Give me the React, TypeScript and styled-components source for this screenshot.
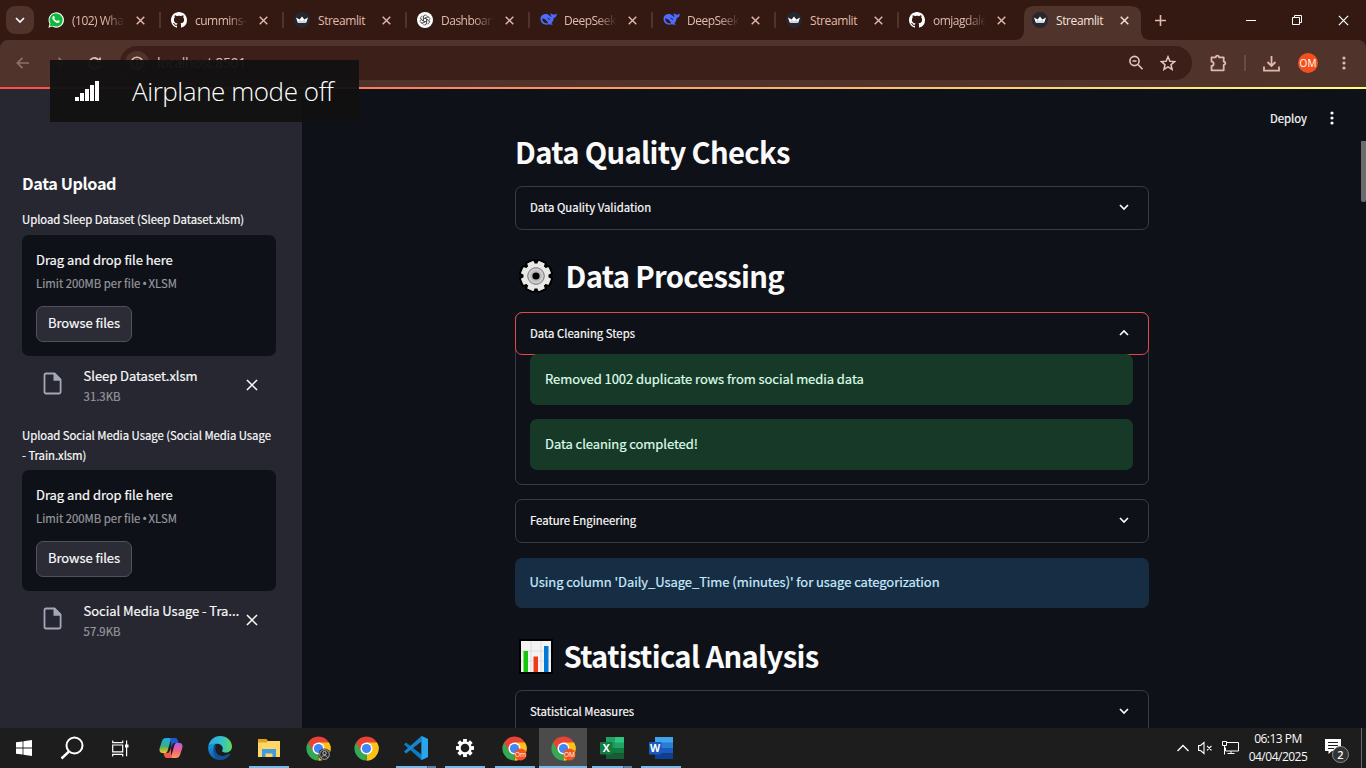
import React from "react";
import styled, { createGlobalStyle } from "styled-components";

const source = `"Noto Sans CJK KR", "Noto Sans", sans-serif`;
const segoe = `"Open Sans", "Noto Sans", sans-serif`;

const Global = createGlobalStyle`
  * { box-sizing: border-box; }
  html, body { margin: 0; padding: 0; overflow: hidden; background: #0e1117; }
  svg { display: block; flex: none; }
`;

const Screen = styled.div`
  position: relative;
  width: 1366px;
  height: 768px;
  display: flex;
  flex-direction: column;
  overflow: hidden;
  font-family: ${source};
  color: #fafafa;
`;

/* ---------- browser chrome ---------- */
const TabStrip = styled.div`
  height: 40px;
  flex: none;
  display: flex;
  align-items: stretch;
  background: #331912;
  font-family: ${segoe};
`;
const TabSearch = styled.div`
  width: 28px;
  height: 28px;
  margin: 6px 4px 0 6px;
  border-radius: 9px;
  background: #50332b;
  display: flex;
  align-items: center;
  justify-content: center;
`;
const Tab = styled.div<{ $active?: boolean; $sep?: boolean }>`
  width: 123px;
  height: 40px;
  display: flex;
  align-items: center;
  position: relative;
  padding-left: 10px;
  color: ${(p) => (p.$active ? "#f5e4de" : "#e2b9ad")};
  &::after {
    content: "";
    position: absolute;
    right: 0;
    top: 12px;
    width: 2px;
    height: 16px;
    background: ${(p) => (p.$sep ? "#50332b" : "transparent")};
  }
`;
const ActiveShape = styled.svg`
  position: absolute;
  left: -8px;
  top: 0;
`;
const TabTitle = styled.div<{ $fade?: boolean }>`
  position: relative;
  width: 54px;
  margin-left: 8px;
  padding-top: 1px;
  overflow: hidden;
  white-space: nowrap;
  font-size: 12px;
  line-height: 18px;
  letter-spacing: ${(p) => (p.$fade ? -0.5 : -0.4)}px;
  mask-image: ${(p) => (p.$fade ? "linear-gradient(90deg, #000 60%, transparent 98%)" : "none")};
`;
const TabClose = styled.div`
  position: relative;
  width: 12px;
  margin-left: 10px;
`;
const Fav = styled.div`
  position: relative;
  width: 16px;
  height: 16px;
`;
const NewTab = styled.div`
  display: flex;
  align-items: center;
  margin-left: 10px;
`;
const WindowButtons = styled.div`
  margin-left: auto;
  display: flex;
  align-items: center;
`;
const WinButton = styled.div`
  width: 46px;
  display: flex;
  justify-content: center;
`;
const Toolbar = styled.div`
  height: 47px;
  flex: none;
  display: flex;
  align-items: flex-start;
  padding-top: 6px;
  background: #50332b;
  border-radius: 8px 8px 0 0;
  color: #e2b9ad;
`;
const ChromeFrame = styled.div`
  flex: none;
  background: #331912;
`;
const NavIcon = styled.div<{ $dim?: boolean; $first?: boolean }>`
  width: 36px;
  height: 34px;
  margin-left: ${(p) => (p.$first ? 4 : 0)}px;
  display: flex;
  align-items: center;
  justify-content: center;
  opacity: ${(p) => (p.$dim ? 0.45 : 1)};
`;
const Omnibox = styled.div`
  margin-left: 8px;
  width: 1072px;
  height: 34px;
  border-radius: 17px;
  background: #3b1f18;
  display: flex;
  align-items: center;
  padding: 0 16px 0 5px;
  font: 14px/20px ${segoe};
  letter-spacing: -0.4px;
`;
const InfoBadge = styled.div`
  width: 24px;
  height: 24px;
  border-radius: 12px;
  background: #50332b;
  display: flex;
  align-items: center;
  justify-content: center;
  margin-right: 8px;
`;
const OmniActions = styled.div`
  margin-left: auto;
  display: flex;
  gap: 16px;
`;
const ToolIcons = styled.div`
  flex: 1;
  height: 34px;
  display: flex;
  align-items: center;
  padding-left: 18px;
`;
const ToolDivider = styled.div`
  width: 2px;
  height: 16px;
  margin: 0 17px 0 17px;
  background: #6c4a41;
`;
const Avatar = styled.div`
  width: 20px;
  height: 20px;
  border-radius: 50%;
  margin: 0 24px 0 18px;
  background: #f4511e;
  color: #fff;
  font: 10px/20px ${segoe};
  text-align: center;
`;
const Gradient = styled.div`
  height: 2px;
  flex: none;
  background: linear-gradient(90deg, #ff4b4b, #fffd80);
`;

/* ---------- page ---------- */
const Page = styled.div`
  height: 639px;
  flex: none;
  display: flex;
  overflow: hidden;
  -webkit-text-stroke: 0.200px;
`;
const Sidebar = styled.aside`
  width: 302px;
  height: 100%;
  padding: 81px 26px 0 22px;
  background: #262730;
`;
const SideHeading = styled.h3`
  margin: 0;
  height: 26px;
  font-size: 16.3px;
  line-height: 26px;
  font-weight: 700;
  letter-spacing: -0.4px;
  -webkit-text-stroke: 0;
`;
const UploadGroup = styled.section<{ $top: number }>`
  margin-top: ${(p) => p.$top}px;
`;
const UploadLabel = styled.div`
  font-size: 11.35px;
  line-height: 20px;
  letter-spacing: -0.040px;
  white-space: nowrap;
`;
const Dropzone = styled.div<{ $gap: number }>`
  height: 121px;
  margin-top: ${(p) => p.$gap}px;
  padding: 14px;
  border-radius: 7px;
  background: #0e1117;
`;
const DropTitle = styled.div`
  font-size: 13px;
  line-height: 22px;
  letter-spacing: -0.060px;
`;
const Muted = styled.div<{ $height: number }>`
  height: ${(p) => p.$height}px;
  font-size: 11.35px;
  line-height: ${(p) => p.$height}px;
  color: #96979c;
`;
const Bullet = styled.span`
  font-family: "Noto Sans", sans-serif;
  font-size: 12.500px;
  line-height: 1;
  margin: 0 -0.800px;
`;
const BrowseButton = styled.button`
  display: block;
  width: 96px;
  height: 36px;
  margin: 11px 0 0;
  padding: 0 0 2px;
  border: 1px solid #51525b;
  border-radius: 7px;
  background: #2b2c36;
  color: #fafafa;
  font: 13px/32px ${source};
  letter-spacing: -0.050px;
  -webkit-text-stroke: 0.200px;
`;
const FileRow = styled.div`
  display: flex;
  align-items: center;
  height: 40px;
  margin-top: 10px;
  padding-left: 20px;
`;
const FileGlyph = styled.div`
  padding-bottom: 5px;
`;
const FileText = styled.div`
  width: 160px;
  margin-left: 20px;
`;
const FileName = styled.div`
  font-size: 13px;
  height: 20px;
  line-height: 20px;
  letter-spacing: -0.050px;
  white-space: nowrap;
`;
const Ellipsis = styled.span`
  font-family: "Noto Sans", sans-serif;
  font-size: 14px;
  line-height: 1;
`;
const FileClose = styled.div`
  margin-left: 2px;
  padding-bottom: 2px;
`;
const Main = styled.main`
  flex: 1;
  position: relative;
  padding-left: 213px;
`;
const Column = styled.div`
  width: 634px;
  display: flex;
  flex-direction: column;
`;
const Heading = styled.h2<{ $top: number; $gap?: number }>`
  display: flex;
  align-items: center;
  gap: ${(p) => p.$gap ?? 0}px;
  height: 42px;
  margin: ${(p) => p.$top}px 0 0;
  font-size: 29.2px;
  line-height: 42px;
  font-weight: 700;
  white-space: nowrap;
  -webkit-text-stroke: 0;
`;
const HeadingText = styled.span`
  padding-bottom: 2px;
  letter-spacing: -0.660px;
`;
const Emoji = styled.span`
  margin-left: 4px;
`;
const Expander = styled.div<{ $top: number; $height: number }>`
  flex: none;
  height: ${(p) => p.$height}px;
  margin-top: ${(p) => p.$top}px;
  border: 1px solid #3a3c42;
  border-radius: 7px;
`;
const Summary = styled.div<{ $open?: boolean }>`
  display: flex;
  justify-content: space-between;
  align-items: center;
  height: ${(p) => (p.$open ? 43 : 42)}px;
  margin: ${(p) => (p.$open ? "-1px" : "0")};
  padding: 0 19px 2px 14px;
  border: ${(p) => (p.$open ? "1px solid #e5484a" : "0")};
  border-radius: 7px;
  font-size: 11.35px;
  line-height: 20px;
`;
const Alert = styled.div<{ $top: number; $inset?: boolean; $info?: boolean }>`
  height: ${(p) => (p.$info ? 50 : 51)}px;
  flex: none;
  margin: ${(p) => p.$top}px ${(p) => (p.$inset ? "15px 0 14px" : "0 0")};
  padding: 0 15px 0 ${(p) => (p.$info ? 14.5 : 15)}px;
  border-radius: 7px;
  background: ${(p) => (p.$info ? "#172d43" : "#173928")};
  color: ${(p) => (p.$info ? "#c7ebff" : "#dffde9")};
  font-size: 13px;
  line-height: ${(p) => (p.$info ? 48 : 50)}px;
  letter-spacing: -0.065px;
`;
const PageActions = styled.div`
  position: absolute;
  right: 32px;
  top: 19px;
  display: flex;
  align-items: center;
  gap: 23px;
  font-size: 11.35px;
  line-height: 20px;
`;
const ScrollThumb = styled.div`
  position: absolute;
  right: 0;
  top: 52px;
  width: 5px;
  height: 61px;
  border-radius: 0 0 2px 2px;
  background: #6b6b6d;
`;

/* ---------- taskbar ---------- */
const Taskbar = styled.footer`
  height: 40px;
  flex: none;
  display: flex;
  background: #1d1d1d;
  font-family: ${segoe};
`;
const TaskItem = styled.div<{ $w: number; $active?: boolean; $line?: number; $tail?: boolean }>`
  position: relative;
  width: ${(p) => p.$w}px;
  display: flex;
  align-items: center;
  justify-content: center;
  background: ${(p) => (p.$active ? "#4b4b4b" : "transparent")};
  &::after {
    content: "";
    position: absolute;
    bottom: 0;
    left: calc(50% - ${(p) => (p.$line ?? 0) / 2}px);
    width: ${(p) => p.$line ?? 0}px;
    height: 2px;
    background: ${(p) => (p.$tail ? "linear-gradient(90deg,#76b9ed 31px,#3f6483 31px,#3f6483 32px,#5683a6 32px)" : "#76b9ed")};
  }
`;
const Tray = styled.div`
  margin-left: auto;
  display: flex;
  align-items: center;
  gap: 9px;
`;
const Clock = styled.div`
  width: 64px;
  margin: 0 6px 0 -2px;
  font-size: 12px;
  line-height: 18px;
  letter-spacing: -0.500px;
  text-align: center;
  white-space: nowrap;
`;
const Notices = styled.div`
  position: relative;
  width: 26px;
  height: 28px;
  margin-right: 1px;
`;
const Count = styled.div`
  position: absolute;
  left: 7px;
  top: 12px;
  width: 17px;
  height: 17px;
  border: 1px solid #8b8b8b;
  border-radius: 50%;
  background: #333;
  font: 600 11px/15px ${segoe};
  text-align: center;
`;
const ShowDesktop = styled.div`
  width: 5px;
  height: 40px;
  border-left: 1px solid #6a6a6a;
`;

const Toast = styled.div`
  position: absolute;
  left: 50px;
  top: 60px;
  width: 309px;
  height: 62px;
  display: flex;
  align-items: center;
  padding-left: 25px;
  background: rgba(17, 17, 17, 0.95);
`;
const ToastText = styled.div`
  margin-left: 32px;
  font: 300 26px/34px ${segoe};
  letter-spacing: -0.430px;
  color: #fff;
  white-space: nowrap;
`;

/* ---------- drawings ---------- */
const Cross = ({ size = 9, width = 1.6, color = "currentColor" }) => (
  <svg width={size} height={size} viewBox="0 0 10 10" stroke={color} strokeWidth={width}>
    <path d="M.8.8l8.4 8.4M9.2.8L.8 9.2" />
  </svg>
);
const Chevron = ({ up = false, size = 10, width = 1.7 }) => (
  <svg width={size} height={size} viewBox="0 0 10 10" fill="none" stroke="currentColor" strokeWidth={width}>
    <path d={up ? "M1 7l4-4 4 4" : "M1 3l4 4 4-4"} />
  </svg>
);
const Dots = ({ color }: { color: string }) => (
  <svg width="4" height="14" viewBox="0 0 4 14" fill={color}>
    <circle cx="2" cy="2" r="1.600" /><circle cx="2" cy="7" r="1.600" /><circle cx="2" cy="12" r="1.600" />
  </svg>
);
const WhatsApp = () => (
  <svg width="16" height="16" viewBox="0 0 16 16">
    <path d="M.4 15.7l1.100-4A7.7 7.7 0 1 1 4.300 14.600z" fill="#fff" />
    <path d="M1.700 14.400l.8-2.9a6.600 6.600 0 1 1 2.300 2.200z" fill="#12b83c" />
    <path d="M5.200 4.200c.6-.5 1-.2 1.200.3l.4 1c.1.3-.5.8-.5 1 .5 1.200 1.500 2 2.700 2.500.4 0 .8-1 1.100-.9l1.500.8c.4.7-.6 2-1.700 2C7.200 11 4.400 7.800 4.300 6.100c0-.8.4-1.500.9-1.900z" fill="#fff" />
  </svg>
);
const GitHub = () => (
  <svg width="16" height="16" viewBox="0 0 16 16" fill="#fff">
    <path d="M8 0C3.580 0 0 3.580 0 8c0 3.540 2.290 6.530 5.470 7.590.4.070.55-.17.55-.38 0-.19-.010-.820-.010-1.490-2.010.37-2.530-.49-2.690-.94-.09-.23-.48-.94-.82-1.130-.28-.15-.68-.52-.010-.530.630-.010 1.080.58 1.230.82.720 1.210 1.870.87 2.330.66.070-.52.280-.87.510-1.070-1.780-.2-3.640-.89-3.640-3.950 0-.87.310-1.590.82-2.150-.080-.2-.360-1.020.080-2.120 0 0 .67-.21 2.200.82.640-.18 1.320-.27 2-.27s1.360.09 2 .27c1.530-1.040 2.200-.82 2.200-.82.440 1.100.160 1.920.080 2.120.51.56.82 1.270.82 2.150 0 3.070-1.870 3.750-3.650 3.950.29.25.54.73.54 1.480 0 1.070-.010 1.930-.010 2.200 0 .21.150.46.550.38A8 8 0 0 0 16 8c0-4.420-3.580-8-8-8z" />
  </svg>
);
const Crown = () => (
  <svg width="16" height="16" viewBox="0 0 16 16">
    <circle cx="8" cy="8" r="8" fill="#262730" />
    <path d="M2 5.500l3.600 1.900L8 4.500l2.400 2.900L14 5.500 12.300 10.500Q8 11.600 3.700 10.500z" fill="#fff" />
    <path d="M5.600 7.400L8 9.200l2.400-1.800 1.900 3.100Q8 11.600 3.700 10.500z" fill="#d6d6da" />
  </svg>
);
const OpenAI = () => (
  <svg width="16" height="16" viewBox="0 0 16 16">
    <circle cx="8" cy="8" r="8" fill="#fff" />
    <g fill="none" stroke="#444" strokeWidth=".700">
      {[0, 60, 120, 180, 240, 300].map((a) => (
        <path key={a} d="M6.400 9V5a2.100 2.100 0 0 1 3.900-1M6.400 7.100L9.700 5.200a2 2 0 0 1 2.300.2" transform={`rotate(${a} 8 8)`} />
      ))}
    </g>
  </svg>
);
const Whale = () => (
  <svg width="17" height="14" viewBox="0 0 17 14">
    <path d="M.5 7C.5 3.800 3 2 6 2c1.500 0 2.300.6 3.300 1.600.8.8 1.700 1.500 2.400 1.500C10.600 3.700 10.300 2 10.800.8c.4.9 1.300 1.600 2.300 1.800 1.300.1 2.400-.3 3.600-1.200.2 2.400-.9 4.200-3 4.700-.1 2.300-1 4-2.400 5.200.5.500 1.200.7 1.800 1-1.500.7-3 .5-4.200 0C4.500 13.600.5 11.300.5 7z" fill="#4d6bfe" />
    <path d="M2.200 6.500c2.500 0 4.500 1.800 6 4.700-3 .8-6-1.300-6-4.700zM7 5.700c1.500-.3 3 .8 3.100 2.600-.8-.2-1.200-1.200-3.100-2.600z" fill="#331912" />
  </svg>
);
const favicons: Record<string, React.ReactNode> = {
  wa: <WhatsApp />, gh: <GitHub />, st: <Crown />, ai: <OpenAI />, ds: <Whale />,
};

const GearEmoji = () => (
  <svg width="34" height="34" viewBox="-17 -17 34 34">
    <g fill="#e8e8e8" stroke="#000" strokeWidth="4" strokeLinejoin="round">
      {[22.5, 67.5, 112.5, 157.5].map((a) => (
        <rect key={a} x="-3.500" y="-15" width="7" height="30" transform={`rotate(${a})`} />
      ))}
      <circle r="12" />
    </g>
    <g fill="#e8e8e8">
      {[22.5, 67.5, 112.5, 157.5].map((a) => (
        <rect key={a} x="-3.500" y="-15" width="7" height="30" rx=".8" transform={`rotate(${a})`} />
      ))}
      <circle r="12.500" />
    </g>
    <circle r="8.300" fill="#ccc" stroke="#777" />
    <circle r="5.600" fill="#b8b8b8" /><circle r="3.600" fill="#000" />
  </svg>
);
const ChartEmoji = () => (
  <svg width="34" height="35" viewBox="0 0 34 35">
    <path d="M0 0h34v35H0z" fill="#000" />
    <path d="M2 2h30v31H2z" fill="#f3f3f3" />
    <path d="M12 2v31M22 2v31M2 12h30M2 22h30" stroke="#ddd" />
    <path d="M4.500 12H9v21H4.500z" fill="#16c60c" />
    <path d="M14.500 17.500H19V33h-4.500z" fill="#f03a17" />
    <path d="M25 7h4.500v26H25z" fill="#0078d7" />
  </svg>
);
const FileIcon = () => (
  <svg width="21.600" height="23" viewBox="0 0 21.600 23">
    <path d="M4 1.500h8.500L18.600 7.600V20A1.500 1.500 0 0 1 17.100 21.500H4A1.500 1.500 0 0 1 2.500 20V3A1.500 1.500 0 0 1 4 1.500z" fill="none" stroke="#a3a8b8" strokeWidth="1.800" />
    <path d="M11.500 1H13L19 7V8.800h-7.500z" fill="#a3a8b8" />
  </svg>
);
const Chrome = ({ badge }: { badge?: string }) => (
  <svg width="25" height="25" viewBox=".5 .5 25 25">
    <path d="M13 13L2.600 7A12 12 0 0 1 23.400 7z" fill="#ea4335" />
    <path d="M13 13L23.400 7A12 12 0 0 1 13 25z" fill="#fbc116" />
    <path d="M13 13v12A12 12 0 0 1 2.600 7z" fill="#34a853" />
    <path d="M13 7h10.400H13L2.600 7l5.200 9z" fill="#ea4335" />
    <path d="M18.200 16L13 25A12 12 0 0 0 23.400 7H13z" fill="#fbc116" />
    <circle cx="13" cy="13" r="6" fill="#fff" /><circle cx="13" cy="13" r="4.600" fill="#4285f4" />
    {badge === "user" && (
      <g><circle cx="19" cy="19" r="6" fill="#252525" /><circle cx="19" cy="19" r="4.800" fill="none" stroke="#ccc" strokeWidth=".8" />
        <circle cx="19" cy="17.600" r="1.700" fill="none" stroke="#ccc" strokeWidth=".9" /><path d="M16 22c.6-2.500 5.400-2.500 6 0" fill="none" stroke="#ccc" strokeWidth=".9" /></g>
    )}
    {badge && badge !== "user" && (
      <g><circle cx="19" cy="19" r="6" fill="#f4511e" />
        <text x="19" y="21.500" fill="#fff" fontSize="6.500" textAnchor="middle" fontFamily="Open Sans">{badge}</text></g>
    )}
  </svg>
);
const StartIcon = () => (
  <svg width="16" height="16" viewBox="0 0 16 16" fill="#fff"><path d="M0 2.300l6.600-.9v6.200H0zM7.400 1.300L16 0v7.600H7.400zM0 8.400h6.600v6.200L0 13.700zM7.400 8.400H16V16l-8.600-1.300z" /></svg>
);
const SearchIcon = () => (
  <svg width="24" height="24" viewBox="0 0 24 24" fill="none" stroke="#fff" strokeWidth="2"><circle cx="14.500" cy="9.500" r="8" /><path d="M9 15.500l-7.500 7" strokeWidth="2.400" /></svg>
);
const TaskView = () => (
  <svg width="17" height="17" viewBox="0 0 17 17" fill="none" stroke="#fff" strokeWidth="1.200"><path d="M.7.5v2.200h10V.5M.7 16.500v-2.200h10v2.200M.7 5h10v6.800H.7zM14.600.5v15.800" /><path d="M13 4.500h3.500v3H13z" fill="#fff" stroke="none" /></svg>
);
const Copilot = () => (
  <svg width="24" height="22" viewBox="0 0 24 22">
    <defs>
      <linearGradient id="cpA" x1="0" y1="0" x2="0" y2="1"><stop stopColor="#17aef0" /><stop offset=".55" stopColor="#3fae7a" /><stop offset="1" stopColor="#f3c51c" /></linearGradient>
      <linearGradient id="cpB" x1="0" y1="0" x2="0" y2="1"><stop stopColor="#b45fe8" /><stop offset=".5" stopColor="#f0618a" /><stop offset="1" stopColor="#fb9b52" /></linearGradient>
    </defs>
    <path d="M7 1h8c-2.500 0-3.200 2-4 4.500L8.500 14c-.5 1.500-1 2-3 2H4c-3 0-4-2-3.300-5L3 4c.7-2 2-3 4-3z" fill="url(#cpA)" />
    <path d="M11 1h5c2 0 2.300 1 3 3l.6 2h-3c-2 0-3 .6-3.500 2.500L12 11V5z" fill="#2057d2" />
    <path d="M17 21H9c2.500 0 3.200-2 4-4.500L15.500 8c.5-1.500 1-2 3-2H20c3 0 4 2 3.300 5L21 18c-.7 2-2 3-4 3z" fill="url(#cpB)" />
    <path d="M13 21H8c-2 0-2.300-1-3-3l-.6-2h3c2 0 3-.6 3.500-2.500L12 11v6z" fill="#ee5a4a" />
  </svg>
);
const Edge = () => (
  <svg width="24" height="24" viewBox="0 0 24 24">
    <defs>
      <linearGradient id="edA" x1="0" y1="0" x2="1" y2="0"><stop stopColor="#2aa6e8" /><stop offset=".6" stopColor="#35c3c7" /><stop offset="1" stopColor="#62da58" /></linearGradient>
      <linearGradient id="edB" x1="0" y1="0" x2="0" y2="1"><stop stopColor="#199ee4" /><stop offset="1" stopColor="#0c59a4" /></linearGradient>
    </defs>
    <path d="M.3 10.500C1.200 4.200 6 0 12 0c7 0 12 5 12 10.500 0 3.500-2.600 6-6 6-2.500 0-4-.8-4-1.600 0-.5.8-1 .8-2.500 0-2.800-2.800-4.700-6-4.700C4.500 7.700 1.500 8.600.3 10.500z" fill="url(#edA)" />
    <path d="M.2 10.800C1.500 8.500 4.800 7 8.500 7.500 5.500 9 5 12 6.500 15.500 8 19.500 12.500 21 17.500 19.500c1.700-.5 3.500-1.700 4.700-1.700C20.500 21.500 16.500 24 12 24 4.800 24-.5 18 .2 10.800z" fill="url(#edB)" />
    <path d="M8.800 8C5.500 13 8 19 13.500 20c3.300.6 6.500-.7 8.700-2.200C20 22 16 24 12.500 24 6 23.500 2 12.500 8.800 8z" fill="#124f98" />
  </svg>
);
const Explorer = () => (
  <svg width="22" height="18" viewBox="0 0 22 18"><path d="M0 0h8.500l1.500 2H22v16H0z" fill="#e0a21c" /><path d="M0 3.500h8.500L10 2H22v16H0z" fill="#ffd667" /><path d="M4 10h14v8h-3.500v-3.500h-7V18H4z" fill="#3f9ddd" /></svg>
);
const VSCode = () => (
  <svg width="24" height="24" viewBox="0 0 24 24">
    <path d="M17.500 0L24 3v18l-6.500 3L0 8.500 2 6.500l15.500 12z" fill="#0b7cc4" />
    <path d="M17.500 0L0 15.500l2 2 15.500-12z" fill="#1686ca" />
    <path d="M17.500 0L24 3v18l-6.500 3z" fill="#29a5ee" />
  </svg>
);
const Settings = () => (
  <svg width="20" height="20" viewBox="-10 -10 20 20">
    <g fill="#fff">{[0, 45, 90, 135].map((a) => <rect key={a} x="-1.900" y="-9" width="3.800" height="18" transform={`rotate(${a})`} />)}</g>
    <circle r="5.500" fill="#1d1d1d" stroke="#fff" strokeWidth="2.400" />
  </svg>
);
const Office = ({ letter, colors }: { letter: string; colors: string[] }) => (
  <svg width="24" height="22" viewBox="0 0 24 22">
    <path d="M6 0h18v6H6z" fill={colors[0]} /><path d="M6 5.500h18V11H6z" fill={colors[1]} />
    <path d="M6 11h18v5.500H6z" fill={colors[2]} /><path d="M6 16.500h18V22H6z" fill={colors[3]} />
    {letter === "X" && <path d="M6 0h9v5.500H6zM6 5.500h9V11H6z" fill="#19965a" opacity=".7" />}
    <rect y="5" width="12.500" height="12.500" rx=".8" fill={colors[4]} />
    <text x="6.200" y="15" fill="#fff" fontSize="10.500" fontWeight="700" textAnchor="middle" fontFamily="Open Sans">{letter}</text>
  </svg>
);

const tabs = [
  { icon: "wa", title: "(102) Wha", fade: true },
  { icon: "gh", title: "cummins-", fade: true },
  { icon: "st", title: "Streamlit" },
  { icon: "ai", title: "Dashboar", fade: true },
  { icon: "ds", title: "DeepSeek", fade: true },
  { icon: "ds", title: "DeepSeek", fade: true },
  { icon: "st", title: "Streamlit" },
  { icon: "gh", title: "omjagdale", fade: true },
  { icon: "st", title: "Streamlit", active: true },
];

const Upload = ({ label, file, cut, size, top, gap }: { label: React.ReactNode; file: string; cut?: boolean; size: string; top: number; gap: number }) => (
  <UploadGroup $top={top}>
    <UploadLabel>{label}</UploadLabel>
    <Dropzone $gap={gap}>
      <DropTitle>Drag and drop file here</DropTitle>
      <Muted $height={24}>Limit 200MB per file <Bullet>•</Bullet> XLSM</Muted>
      <BrowseButton>Browse files</BrowseButton>
    </Dropzone>
    <FileRow>
      <FileGlyph><FileIcon /></FileGlyph>
      <FileText>
        <FileName>{file}{cut && <Ellipsis>…</Ellipsis>}</FileName>
        <Muted $height={20}>{size}</Muted>
      </FileText>
      <FileClose><Cross size={12} width={1.300} /></FileClose>
    </FileRow>
  </UploadGroup>
);

export default function App() {
  return (
    <Screen>
      <Global />
      <TabStrip>
        <TabSearch><Chevron /></TabSearch>
        {tabs.map((t, i) => (
          <Tab key={i} $active={t.active} $sep={i < 7}>
            {t.active && (
              <ActiveShape width="137" height="40" viewBox="0 0 137 40" fill="#50332b">
                <path d="M0 40q10 0 10-10V16Q10 6 20 6h97q10 0 10 10v14q0 10 10 10z" />
              </ActiveShape>
            )}
            <Fav>{favicons[t.icon]}</Fav>
            <TabTitle $fade={t.fade}>{t.title}</TabTitle>
            <TabClose><Cross /></TabClose>
          </Tab>
        ))}
        <NewTab>
          <svg width="11" height="11" viewBox="0 0 11 11" stroke="#e2b9ad" strokeWidth="1.600"><path d="M5.500 0v11M0 5.500h11" /></svg>
        </NewTab>
        <WindowButtons>
          <WinButton><svg width="10" height="10" stroke="#fff"><path d="M0 5.500h10" /></svg></WinButton>
          <WinButton><svg width="10" height="10" stroke="#fff" fill="none"><path d="M.5 2.500h7v7h-7zM2.500 2.500v-2h7v7h-2" /></svg></WinButton>
          <WinButton><Cross size={11} width={1.100} color="#fff" /></WinButton>
        </WindowButtons>
      </TabStrip>

      <ChromeFrame>
        <Toolbar>
          <NavIcon $first $dim><svg width="13" height="12" viewBox="0 0 13 12" fill="none" stroke="currentColor" strokeWidth="1.700"><path d="M13 6H1.500M6.500.8L1.300 6l5.200 5.200" /></svg></NavIcon>
          <NavIcon $dim><svg width="13" height="12" viewBox="0 0 13 12" fill="none" stroke="currentColor" strokeWidth="1.700"><path d="M0 6h11.500M6.500.8L11.700 6l-5.200 5.200" /></svg></NavIcon>
          <NavIcon><svg width="13" height="13" viewBox="0 0 13 13" fill="none" stroke="currentColor" strokeWidth="1.800"><path d="M11.500 8A5.300 5.300 0 1 1 11 3.500M12 .5v4.200H7.800" /></svg></NavIcon>
          <Omnibox>
            <InfoBadge><svg width="14" height="14" viewBox="0 0 14 14" fill="none" stroke="currentColor" strokeWidth="1.500"><circle cx="7" cy="7" r="5.800" /><path d="M7 6.300V10M7 3.700v1.400" /></svg></InfoBadge>
            localhost:8501
            <OmniActions>
              <svg width="16" height="16" viewBox="0 0 16 16" fill="none" stroke="#e0c9c2" strokeWidth="1.600"><circle cx="6.500" cy="6" r="4.600" /><path d="M10 9.500l4.500 4.800M4.500 6h4" /></svg>
              <svg width="16" height="16" viewBox="0 0 16 16" fill="none" stroke="#e0c9c2" strokeWidth="1.500"><path d="M8 1.800l1.900 4.400 4.700.4-3.600 3.100 1.100 4.700L8 11.900l-4.100 2.500L5 9.700 1.400 6.600l4.700-.4z" /></svg>
            </OmniActions>
          </Omnibox>
          <ToolIcons>
            <svg width="17" height="19" viewBox="0 0 17 19" fill="none" stroke="currentColor" strokeWidth="1.800"><path d="M1.500 3.300h4.300a1.600 1.600 0 0 1 3.200 0h4.700v4.400a1.600 1.600 0 0 1 0 3.200v5.400H1.500v-4.300a2.200 2.200 0 0 0 0-4.400z" strokeLinejoin="round" /></svg>
            <ToolDivider />
            <svg width="17" height="17" viewBox="0 0 17 17" fill="none" stroke="currentColor" strokeWidth="1.800"><path d="M8.500 1v10M4.500 7l4 4 4-4M1 11.500v4.100h15v-4.100" /></svg>
            <Avatar>OM</Avatar>
            <Dots color="#e2b9ad" />
          </ToolIcons>
        </Toolbar>
      </ChromeFrame>
      <Gradient />

      <Page>
        <Sidebar>
          <SideHeading>Data Upload</SideHeading>
          <Upload top={13} gap={6} label="Upload Sleep Dataset (Sleep Dataset.xlsm)" file="Sleep Dataset.xlsm" size="31.3KB" />
          <Upload top={19} gap={5} label={<>Upload Social Media Usage (Social Media Usage<br />- Train.xlsm)</>} file="Social Media Usage - Tra" cut size="57.9KB" />
        </Sidebar>
        <Main>
          <Column>
            <Heading $top={42}><HeadingText>Data Quality Checks</HeadingText></Heading>
            <Expander $top={13} $height={44}><Summary>Data Quality Validation<Chevron /></Summary></Expander>
            <Heading $top={25} $gap={12.5}><Emoji><GearEmoji /></Emoji><HeadingText>Data Processing</HeadingText></Heading>
            <Expander $top={15} $height={173}>
              <Summary $open>Data Cleaning Steps<Chevron up /></Summary>
              <Alert $top={0} $inset>Removed 1002 duplicate rows from social media data</Alert>
              <Alert $top={14} $inset>Data cleaning completed!</Alert>
            </Expander>
            <Expander $top={14} $height={44}><Summary>Feature Engineering<Chevron /></Summary></Expander>
            <Alert $top={15} $info>Using column 'Daily_Usage_Time (minutes)' for usage categorization</Alert>
            <Heading $top={27} $gap={10.5}><Emoji><ChartEmoji /></Emoji><HeadingText>Statistical Analysis</HeadingText></Heading>
            <Expander $top={13} $height={44}><Summary>Statistical Measures<Chevron /></Summary></Expander>
          </Column>
          <PageActions>Deploy<Dots color="#fafafa" /></PageActions>
          <ScrollThumb />
        </Main>
      </Page>

      <Taskbar>
        <TaskItem $w={48}><StartIcon /></TaskItem>
        <TaskItem $w={48}><SearchIcon /></TaskItem>
        <TaskItem $w={48}><TaskView /></TaskItem>
        <TaskItem $w={53}><Copilot /></TaskItem>
        <TaskItem $w={46}><Edge /></TaskItem>
        <TaskItem $w={52} $line={40}><Explorer /></TaskItem>
        <TaskItem $w={46}><Chrome badge="user" /></TaskItem>
        <TaskItem $w={51}><Chrome /></TaskItem>
        <TaskItem $w={48} $line={40} $tail><VSCode /></TaskItem>
        <TaskItem $w={50} $line={40}><Settings /></TaskItem>
        <TaskItem $w={49} $line={40}><Chrome badge="Om" /></TaskItem>
        <TaskItem $w={48} $line={48} $active><Chrome badge="OM" /></TaskItem>
        <TaskItem $w={50} $line={40} $tail><Office letter="X" colors={["#33c481", "#21a366", "#107c41", "#185c37", "#107c41"]} /></TaskItem>
        <TaskItem $w={48} $line={40}><Office letter="W" colors={["#41a5ee", "#2b7cd3", "#185abd", "#103f91", "#185abd"]} /></TaskItem>
        <Tray>
          <svg width="12" height="8" viewBox="0 0 12 8" fill="none" stroke="#fff" strokeWidth="1.300"><path d="M.5 7L6 1.500 11.500 7" /></svg>
          <svg width="15" height="14" viewBox="0 0 15 14" fill="none" stroke="#fff" strokeWidth="1.100"><path d="M.6 4.500h2L6 1.500v11L2.600 9.500h-2zM9 4.800l4.500 4.500M13.500 4.800L9 9.300" /></svg>
          <svg width="17" height="14" viewBox="0 0 17 14" fill="none" stroke="#fff"><path d="M5 1.500h11.500v8.500H3.500V6.500M.5.500h4v4h-4zM2.500 4.500v9M5.500 12.500h7M9 10v2.500" /></svg>
          <Clock>06:13 PM<br />04/04/2025</Clock>
          <Notices>
            <svg width="17" height="20" viewBox="0 0 17 20"><path d="M0 5h16v12H7l-3.500 3V17H0z" fill="#fff" /><path d="M3 8.500h10M3 11.500h10M3 14.500h6" stroke="#1d1d1d" /></svg>
            <Count>2</Count>
          </Notices>
          <ShowDesktop />
        </Tray>
      </Taskbar>

      <Toast>
        <svg width="25" height="22" viewBox="0 0 25 22" fill="#fff"><path d="M0 17h4v4H0zM5 13h4v8H5zM10 9h4v12h-4zM15 5h4v16h-4zM20 1h4v20h-4z" /></svg>
        <ToastText>Airplane mode off</ToastText>
      </Toast>
    </Screen>
  );
}
